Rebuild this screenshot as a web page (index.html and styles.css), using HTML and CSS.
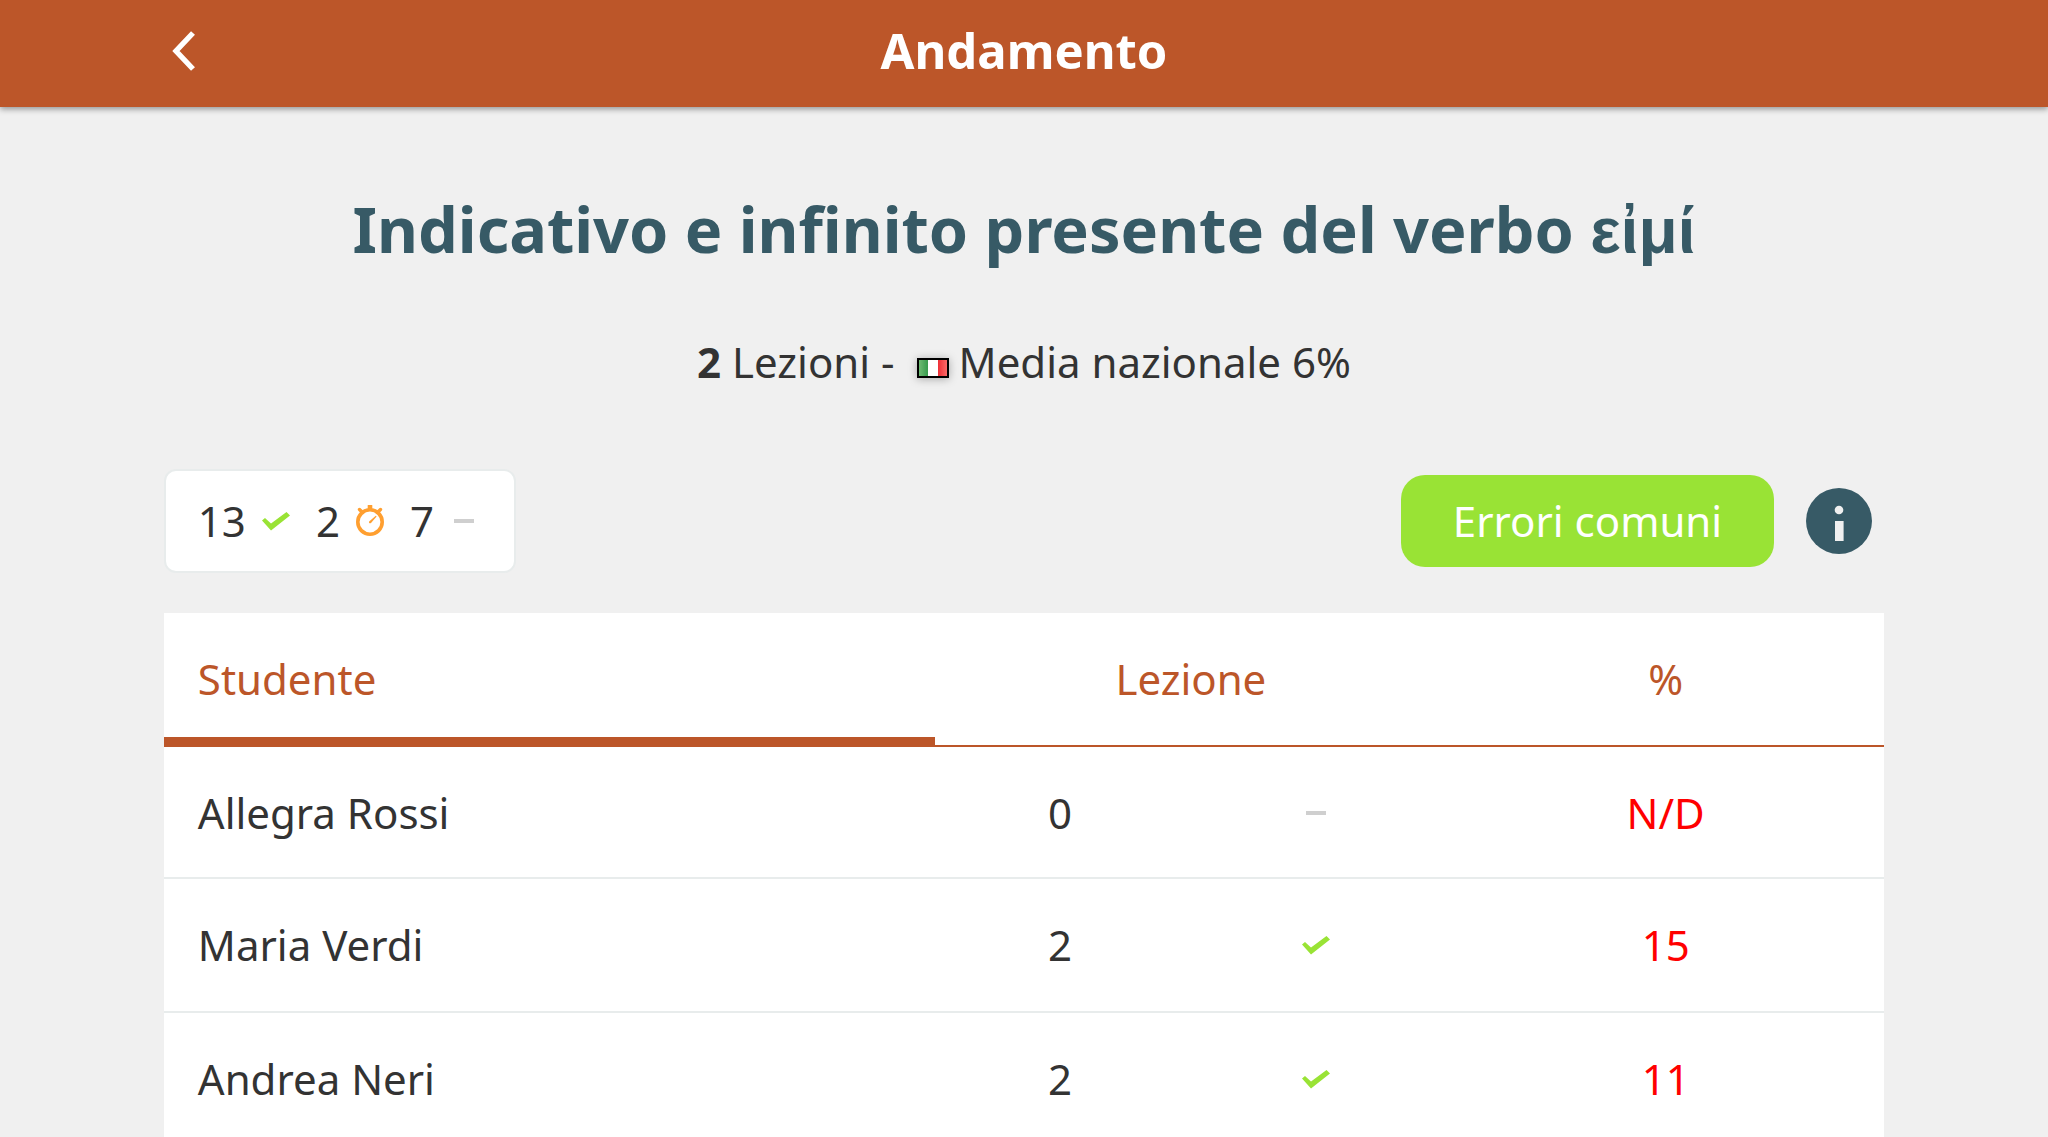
FILE: index.html
```html
<!DOCTYPE html>
<html lang="it">

<head>
    <meta charset="utf-8">
    <meta name="viewport" content="width=device-width, initial-scale=1"/>
    <title>Andamento</title>
    <link rel="stylesheet" href="styles.css">
</head>

<body>
    <!-- Shared icons -->
    <svg class="sprite" aria-hidden="true">
        <symbol id="check" viewBox="0 0 32 32">
            <path d="M2 15.5 L5 13 L11 18.5 L26.5 7 L30 10.5 L11 25.5 Z" fill="#99e335"/>
        </symbol>
        <symbol id="dash" viewBox="0 0 32 32">
            <rect x="6" y="14" width="20" height="4" fill="#cfcfcf"/>
        </symbol>
        <symbol id="timer" viewBox="0 0 32 32">
            <g fill="none" stroke="#ff9f30" stroke-linecap="round">
                <circle cx="16" cy="17" r="12.2" stroke-width="3.6"/>
                <path d="M5.5 4.5 L8.5 7.5 M26.5 4.5 L23.5 7.5" stroke-width="3.4"/>
            </g>
            <rect x="13.7" y="-.5" width="4.6" height="6" rx="1" fill="#ff9f30"/>
            <path d="M21.8 10.8 L22.6 11.6 L17 18 Q16 18.6 15.2 18 Q14.6 17 15.4 16.2 Z" fill="#ff9f30"/>
        </symbol>
    </svg>

    <header class="topbar">
        <a class="back" href="#" aria-label="Indietro">
            <svg width="24" height="42" viewBox="0 0 24 42">
                <path d="M21 4 L4 22 L21 40" fill="none" stroke="#fff" stroke-width="5.4"/>
            </svg>
        </a>
        <h1 class="topbar-title">Andamento</h1>
    </header>

    <main class="content">
        <h2 class="unit-title">Indicativo e infinito presente del verbo <span class="greek" lang="el">εἰμί</span></h2>
        <p class="unit-info">
            <span><strong>2</strong> Lezioni -</span>
            <svg class="flag" viewBox="0 0 32 20" role="img" aria-label="Italia">
                <defs>
                    <linearGradient id="green">
                        <stop offset="0" stop-color="#6fbb74"/>
                        <stop offset="1" stop-color="#359a4c"/>
                    </linearGradient>
                    <linearGradient id="red">
                        <stop offset="0" stop-color="#ee2f36"/>
                        <stop offset="1" stop-color="#fb6a68"/>
                    </linearGradient>
                </defs>
                <rect width="32" height="20" fill="#000"/>
                <rect x="2" y="2" width="9" height="16" fill="url(#green)"/>
                <rect x="11" y="2" width="10" height="16" fill="#fff"/>
                <rect x="21" y="2" width="9" height="16" fill="url(#red)"/>
            </svg>
            <span>Media nazionale 6%</span>
        </p>

        <div class="toolbar">
            <ul class="summary">
                <li>13 <svg class="icon" role="img" aria-label="completati"><use href="#check"/></svg></li>
                <li>2 <svg class="icon" role="img" aria-label="in ritardo"><use href="#timer"/></svg></li>
                <li>7 <svg class="icon" role="img" aria-label="non svolti"><use href="#dash"/></svg></li>
            </ul>
            <div class="actions">
                <button class="errors" type="button">Errori comuni</button>
                <button class="info" type="button" aria-label="Informazioni">
                    <svg viewBox="0 0 66 66">
                        <circle cx="33" cy="33" r="33" fill="#375a66"/>
                        <circle cx="33" cy="22" r="4.3" fill="#f0f0f0"/>
                        <rect x="29" y="33" width="8.6" height="20" fill="#f0f0f0"/>
                    </svg>
                </button>
            </div>
        </div>

        <table class="results">
            <colgroup>
                <col class="col-name">
                <col class="col-lesson">
                <col class="col-status">
                <col class="col-score">
            </colgroup>
            <thead>
                <tr>
                    <th class="name sorted" scope="col">Studente</th>
                    <th scope="colgroup" colspan="2">Lezione</th>
                    <th scope="col">%</th>
                </tr>
            </thead>
            <tbody>
                <tr>
                    <td class="name">Allegra Rossi</td>
                    <td>0</td>
                    <td><svg class="icon" role="img" aria-label="non svolto"><use href="#dash"/></svg></td>
                    <td class="low">N/D</td>
                </tr>
                <tr>
                    <td class="name">Maria Verdi</td>
                    <td>2</td>
                    <td><svg class="icon" role="img" aria-label="completato"><use href="#check"/></svg></td>
                    <td class="low">15</td>
                </tr>
                <tr>
                    <td class="name">Andrea Neri</td>
                    <td>2</td>
                    <td><svg class="icon" role="img" aria-label="completato"><use href="#check"/></svg></td>
                    <td class="low">11</td>
                </tr>
            </tbody>
        </table>
    </main>
</body>

</html>
```

FILE: styles.css
```css
* {
    box-sizing: border-box;
}

body {
    margin: 0;
    background: #f0f0f0;
    color: #333;
    font-family: "Noto Sans", sans-serif;
    font-size: 42px;
    line-height: 62px;
}

.sprite {
    display: none;
}

.icon {
    display: block;
    width: 32px;
    height: 32px;
    overflow: visible;
}

/* Top bar */
.topbar {
    display: grid;
    grid-template-columns: 1fr auto 1fr;
    align-items: center;
    padding: 16px 8% 23px;
    background: #bc5629;
    color: #fff;
    box-shadow: 0 2px 6px rgba(0,0,0,0.4);
}

.back {
    justify-self: start;
    padding: 0 8px;
}

.back svg {
    display: block;
    overflow: visible;
}

.topbar-title {
    margin: 0;
    font-size: 49px;
    line-height: 68px;
}

/* Unit heading */
.content {
    padding: 0 8%;
}

.unit-title {
    margin: 78px 0 58px;
    color: #375a66;
    font-size: 63px;
    line-height: 88px;
    text-align: center;
}

.greek {
    font-family: "Liberation Sans", Arial, sans-serif;
    font-size: 64px;
    line-height: 1;
}

.unit-info {
    display: flex;
    justify-content: center;
    align-items: baseline;
    margin: 0 0 76px;
}

.flag {
    width: 32px;
    height: 20px;
    margin: 0 10px 0 22px;
    filter: drop-shadow(0 1px 4px rgba(0,0,0,0.3));
}

/* Summary and buttons */
.toolbar {
    display: flex;
    justify-content: space-between;
    align-items: center;
    margin-bottom: 40px;
}

.summary {
    display: flex;
    gap: 24px;
    margin: 0;
    padding: 19px 34px 19px 32px;
    list-style: none;
    background: #fff;
    border: 2px solid #e8ecec;
    border-radius: 12px;
}

.summary li {
    display: flex;
    align-items: center;
    gap: 14px;
}

.actions {
    display: flex;
    align-items: center;
    gap: 32px;
    padding-right: 12px;
}

.errors {
    padding: 15px 52px;
    border: 0;
    border-radius: 24px;
    background: #99e335;
    color: #fff;
    font: inherit;
}

.info {
    width: 66px;
    height: 66px;
    padding: 0;
    border: 0;
    background: none;
}

.info svg {
    display: block;
}

/* Results table */
.results {
    width: 100%;
    table-layout: fixed;
    border-spacing: 0;
    background: #fff;
    text-align: center;
}

.col-name {
    width: 44.8%;
}

.col-lesson {
    width: 14.6%;
}

.col-status {
    width: 15.2%;
}

.col-score {
    width: 25.4%;
}

.results th {
    padding: 35px 0;
    border-bottom: 2px solid #bc5629;
    color: #bc5629;
    font-weight: normal;
}

.results td {
    padding: 35px 0;
}

.results tbody tr:first-child td {
    padding-bottom: 33px;
}

.results tr + tr td {
    border-top: 2px solid #e8ecec;
}

.results .name {
    padding-left: 34px;
    text-align: left;
}

.results .sorted {
    box-shadow: inset 0 -8px #bc5629;
}

.results .icon {
    margin: 0 auto;
}

.low {
    color: #f00;
}
```
